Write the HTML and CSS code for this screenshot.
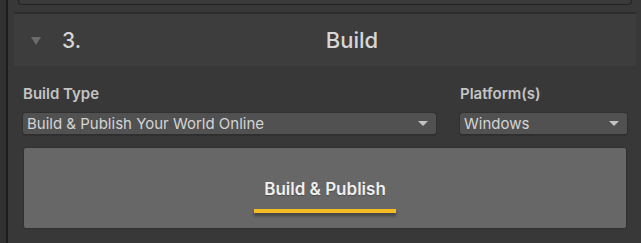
FILE: index.html
```html
<!DOCTYPE html>
<html>
<head>
  <link rel="stylesheet" href="styles.css">
</head>
<body>
  <div class="window">
    <div class="gutter"></div>
    <div class="panel">
      <div class="prev-box"></div>

      <div class="section">
        <div class="section-header">
          <span class="foldout"></span>
          <span class="step">3.</span>
          <span class="section-title">Build</span>
        </div>

        <div class="section-body">
          <div class="fields">
            <div class="field field-type">
              <div class="field-label">Build Type</div>
              <div class="dropdown">
                <span>Build &amp; Publish Your World Online</span>
                <span class="caret"></span>
              </div>
            </div>
            <div class="field field-platform">
              <div class="field-label">Platform(s)</div>
              <div class="dropdown">
                <span>Windows</span>
                <span class="caret"></span>
              </div>
            </div>
          </div>

          <div class="build-button">
            <span class="build-text">Build &amp; Publish</span>
            <span class="build-bar"></span>
          </div>
        </div>
      </div>
    </div>
  </div>
</body>
</html>
```

FILE: styles.css
```css
/* Global styling */

html, body {
  margin: 0;
  width: 100%;
  height: 100%;
  background-color: #383838;
  font-family: Inter, "Noto Sans", sans-serif;
  overflow: hidden;
}

.window {
  display: flex;
  height: 243px;
}

.gutter {
  width: 6px;
  background-color: #303030;
  border-right: 2px solid #1c1c1c;
  flex-shrink: 0;
}

.panel {
  flex-grow: 1;
  display: flex;
  flex-direction: column;
}

/* Bottom of the previous section box */
.prev-box {
  height: 4px;
  margin: 0 9px 0 10px;
  border: 1px solid #232323;
  border-top: 0;
  border-radius: 0 0 4px 4px;
  background-color: #3a3a3a;
}

.section {
  margin: 7px 5px 0 6px;
  border-top: 2px solid #2c2c2c;
  flex-grow: 1;
  display: flex;
  flex-direction: column;
}

.section-header {
  height: 52px;
  background-color: #3d3d3d;
  display: flex;
  align-items: center;
  position: relative;
}

.foldout {
  width: 0;
  height: 0;
  margin-left: 17px;
  margin-top: 1px;
  border-left: 5px solid transparent;
  border-right: 5px solid transparent;
  border-top: 8px solid #6c6c6c;
}

.step {
  margin-left: 21px;
  font-size: 21px;
  font-weight: 500;
  color: #d6d6d6;
}

.section-title {
  position: absolute;
  left: 54px;
  right: 0;
  text-align: center;
  font-size: 22px;
  font-weight: 500;
  color: #d6d6d6;
  pointer-events: none;
}

.section-body {
  padding: 20px 9px 0 9px;
}

/* Fields */

.fields {
  display: flex;
  gap: 24px;
}

.field-type {
  flex-grow: 1;
}

.field-platform {
  width: 167px;
}

.field-label {
  font-size: 15px;
  font-weight: 600;
  color: #c4c4c4;
  height: 16px;
  line-height: 16px;
  margin-bottom: 11px;
}

.dropdown {
  height: 22px;
  box-sizing: border-box;
  background-color: #515151;
  border-radius: 3px;
  border-bottom: 1px solid #2e2e2e;
  box-shadow: 0 0 0 1px #303030;
  display: flex;
  align-items: center;
  justify-content: space-between;
  padding: 0 8px 0 4px;
  font-size: 15px;
  color: #d4d4d4;
}

.caret {
  width: 0;
  height: 0;
  border-left: 5px solid transparent;
  border-right: 5px solid transparent;
  border-top: 5px solid #c4c4c4;
}

/* Big button */

.build-button {
  margin-top: 12px;
  height: 82px;
  box-sizing: border-box;
  background-color: #676767;
  border: 1px solid #303030;
  border-radius: 3px;
  display: flex;
  flex-direction: column;
  align-items: center;
  padding-top: 31px;
}

.build-text {
  font-size: 17px;
  font-weight: 600;
  color: #efefef;
  text-shadow: 0 1px 1px rgba(0, 0, 0, 0.25);
}

.build-bar {
  margin-top: 10px;
  width: 142px;
  height: 4px;
  background-color: #f5bb22;
  box-shadow: 0 3px 3px rgba(0, 0, 0, 0.35);
}
```
